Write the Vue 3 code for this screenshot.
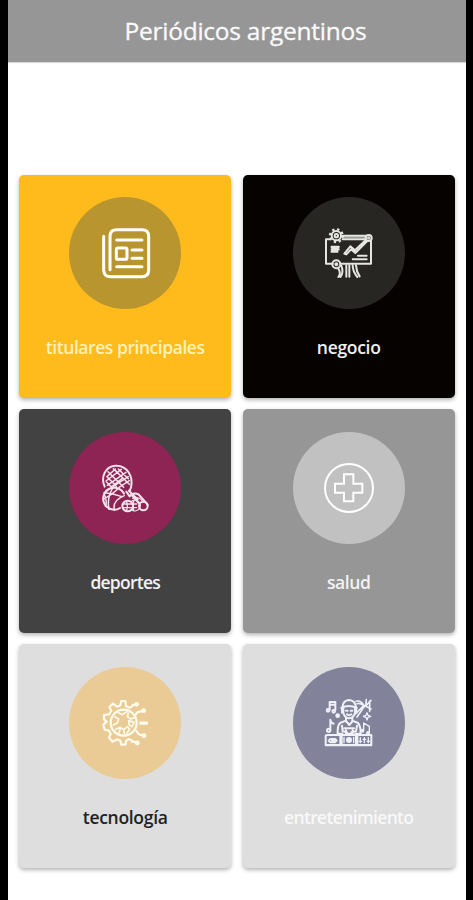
<script setup>
const cards = [
  { id: 'news', label: 'titulares principales', box: '105 113 150 150' },
  { id: 'business', label: 'negocio', box: '102 113 150 150' },
  { id: 'sports', label: 'deportes', box: '105 104 150 150' },
  { id: 'health', label: 'salud', box: '102 104 150 150' },
  { id: 'tech', label: 'tecnología', box: '105 107 150 150' },
  { id: 'fun', label: 'entretenimiento', box: '102 107 150 150' },
]
</script>

<template>
  <div class="screen">
    <main class="page">
      <header class="bar"><h1 class="title">Periódicos argentinos</h1></header>
      <section class="grid">
        <article v-for="card in cards" :key="card.id" class="card" :class="card.id">
          <div class="disc">
            <svg class="icon" :viewBox="card.box" fill="none" stroke="currentColor" stroke-linecap="round" stroke-linejoin="round">
              <g v-if="card.id === 'news'" stroke-width="9">
                <path d="M116 138V238Q116 259 137 259H231Q251 259 251 239V138Q251 118 231 118H155Q135 118 135 138V238" />
                <rect x="154" y="173" width="32" height="34" rx="5" />
                <path d="M155 149H231M201 179H231M201 204H231M155 229H231" />
              </g>
              <g v-else-if="card.id === 'business'" stroke-width="6">
                <path d="M119 147H108V220H128M158 136H227M158 147H224M243 153V220H151" />
                <path d="M158 141H226" opacity="0.6" />
                <circle cx="139" cy="136" r="14" />
                <circle cx="139" cy="136" r="19" stroke-width="7" stroke-dasharray="7 7.9" stroke-linecap="butt" />
                <circle cx="139" cy="136" r="5" />
                <circle cx="236" cy="143" r="9" />
                <circle cx="236" cy="143" r="2" />
                <path d="M163 190L181 168L195 180L228 148M169 192L183 177L196 188L231 153M163 190L169 192" stroke-width="6" />
                <path d="M125 170H146M125 177H146M125 184H142" stroke-width="7" />
                <path d="M204 196H230M188 207H230" />
                <circle cx="139" cy="222" r="12" />
                <circle cx="139" cy="222" r="3" />
                <path d="M145 235Q154 248 145 260M154 226Q162 247 151 260M169 225V259M178 225V259M188 225Q188 243 202 260M198 225Q199 243 209 258" />
              </g>
              <g v-else-if="card.id === 'sports'" stroke-width="6">
                <path d="M119 175C107 149 119 114 151 112C185 110 206 143 198 178L193 189" />
                <path d="M126 145L151 122M123 158L169 123M127 171L183 132M145 174L190 145M162 177L193 157M129 130L176 177M145 121L193 168M126 145L154 174M160 122L190 151M125 162L137 174M138 176L172 150M150 125L182 157" stroke-width="4.5" />
                <path d="M165 239A33 33 0 1 1 177 196" />
                <path d="M117 193Q143 194 171 205M114 214Q141 199 159 181M132 243Q125 211 143 179M148 245Q142 216 178 202M118 199Q128 221 121 234" stroke-width="4.5" />
                <path d="M184 190L194 204L201 197L192 187M203 199L218 213M204 196Q219 193 225 203L248 229M201 201L222 225" />
                <circle cx="235" cy="233" r="13" />
                <circle cx="188" cy="233" r="16" />
                <path d="M200 219A16 16 0 1 1 200 244M173 227H215M173 238H215M184 218Q190 231 184 248M207 218Q200 231 207 248M203 210Q220 204 231 216" stroke-width="4" />
              </g>
              <g v-else-if="card.id === 'health'" stroke-width="6">
                <circle cx="177" cy="179" r="72" />
                <path d="M162 138H190V166H217V193H190V219H162V193H135V166H162Z" stroke-linejoin="miter" />
              </g>
              <g v-else-if="card.id === 'tech'" stroke-width="6.5">
                <path d="M203 128Q198 139 190 135L183 131L181 116H169L166 129L156 133L144 124L133 134L139 146L132 156L117 158V171L125 178L115 187L119 202L132 205L137 215L132 226L143 238L156 231L166 235L169 247H181L184 235L192 230Q199 231 202 239" />
                <circle cx="176" cy="181" r="39" />
                <path d="M149 163L161 170L157 182L145 188M160 151L172 157L186 148M190 152L187 163L198 170L210 165M191 175L207 180L201 193L193 188ZM152 201L166 195L176 202L188 193L194 201L186 212M166 197L162 211M176 202L179 216" stroke-width="5" />
                <circle cx="215" cy="126" r="4" />
                <circle cx="236" cy="145" r="4" />
                <circle cx="237" cy="220" r="4" />
                <circle cx="217" cy="242" r="4" />
                <path d="M212 157Q217 147 230 147M226 181H246M226 184H246M214 205Q219 218 231 219M203 129L211 127M203 236L213 241" />
              </g>
              <g v-else stroke-width="6">
                <path d="M119 142V119H136V143M119 127H136M121 172V202M121 173Q123 182 131 184" />
                <circle cx="114" cy="144" r="4" /><circle cx="131" cy="147" r="4" />
                <circle cx="116" cy="204" r="5" /><circle cx="143" cy="160" r="4" fill="currentColor" />
                <path d="M157 136Q159 114 177 113Q196 114 198 136M154 137Q176 125 200 137M160 137V151Q164 166 177 168Q191 166 195 151V137M156 141V151M199 141V151M168 145H173M182 145H187M171 156Q178 161 184 156" />
                <path d="M168 167V175L150 182Q142 190 143 214H157M187 167V175L204 182Q212 191 212 214H196M156 190L158 207L171 210M201 190L198 207L184 210M168 176L178 188L188 176M163 198H192M168 204V214H188V204" />
                <path d="M107 248V222Q107 218 112 218H151V248ZM155 218H198V248H155ZM202 218H244V248H202ZM107 249H244" />
                <path d="M121 230H136L140 235L135 240H121L116 235Z" />
                <path d="M127 235H132" stroke-width="8" />
                <circle cx="177" cy="233" r="6" fill="currentColor" />
                <path d="M162 225V241M191 225V241M211 226V241M223 226V241M235 226V241M207 237H215M219 231H227M231 237H239" stroke-width="4" />
                <path d="M198 117Q212 112 223 131Q210 121 201 124M229 112L227 131L243 114M224 131L201 164M219 132L196 155M228 132L243 140M239 117V147" stroke-width="5" />
                <path d="M231 151L234 159L242 162L234 165L231 173L228 165L220 162L228 159ZM221 204V182L238 192V211" stroke-width="4" />
                <circle cx="217" cy="205" r="3" /><circle cx="234" cy="212" r="3" />
              </g>
            </svg>
          </div>
          <span class="label">{{ card.label }}</span>
        </article>
      </section>
    </main>
  </div>
</template>

<style>
body {
  margin: 0;
  background: #000;
}
</style>

<style scoped>
.screen {
  box-sizing: border-box;
  height: 900px;
  padding: 0 6.7px 0 7.6px;
  overflow: hidden;
  background: #000;
  font-family: "Open Sans", "Noto Sans", sans-serif;
}
.page {
  height: 100%;
  background: #fff;
}
.bar {
  height: 62px;
  display: flex;
  justify-content: center;
  background: #969696;
  box-shadow: 0 1px 1px rgba(0, 0, 0, 0.15);
}
.title {
  margin: 0 0 0 17px;
  color: #fafafa;
  font-size: 24.5px;
  font-weight: 500;
  line-height: 61px;
  letter-spacing: -0.25px;
  white-space: nowrap;
  -webkit-text-stroke: 0.3px currentColor;
}
.grid {
  display: grid;
  grid-template-columns: 1fr 1fr;
  grid-auto-rows: 223.3px;
  gap: 11.7px;
  padding: 112.5px 11.7px 0;
}
.card {
  display: flex;
  flex-direction: column;
  align-items: center;
  border-radius: 5px;
  box-shadow: 0 2px 4px rgba(0, 0, 0, 0.3);
  color: #fff;
}
.disc {
  width: 112px;
  height: 112px;
  margin-top: 22.3px;
  border-radius: 50%;
  display: grid;
  place-items: center;
}
.icon {
  width: 50px;
  height: 50px;
  overflow: visible;
}
.label {
  margin-top: 25px;
  font-size: 17.5px;
  font-weight: 600;
  line-height: 26px;
  letter-spacing: -0.45px;
  white-space: nowrap;
}
.news { background: #ffbb1c; }
.news .disc { background: #b9952f; }
.news .label { color: #fff1b9; }
.business { background: #050200; }
.business .disc { background: #272622; }
.business .icon { color: #e5e5e3; }
.business .label { color: #efefef; letter-spacing: -0.3px; }
.sports { background: #424242; }
.sports .disc { background: #8e2453; }
.sports .icon { color: #f5e4ec; }
.sports .label { color: #f2f2f2; letter-spacing: -0.75px; }
.health { background: #969696; }
.health .disc { background: #c1c1c1; }
.health .label { color: #f2f2f2; }
.tech { background: #dedede; }
.tech .disc { background: #eacb95; }
.tech .icon { color: #fffbed; }
.tech .label { color: #222; letter-spacing: -0.3px; }
.fun { background: #dedede; }
.fun .disc { background: #82839a; }
.fun .icon { color: #f0f0f8; }
.fun .label { color: #f8f8f8; letter-spacing: -0.65px; }
</style>
